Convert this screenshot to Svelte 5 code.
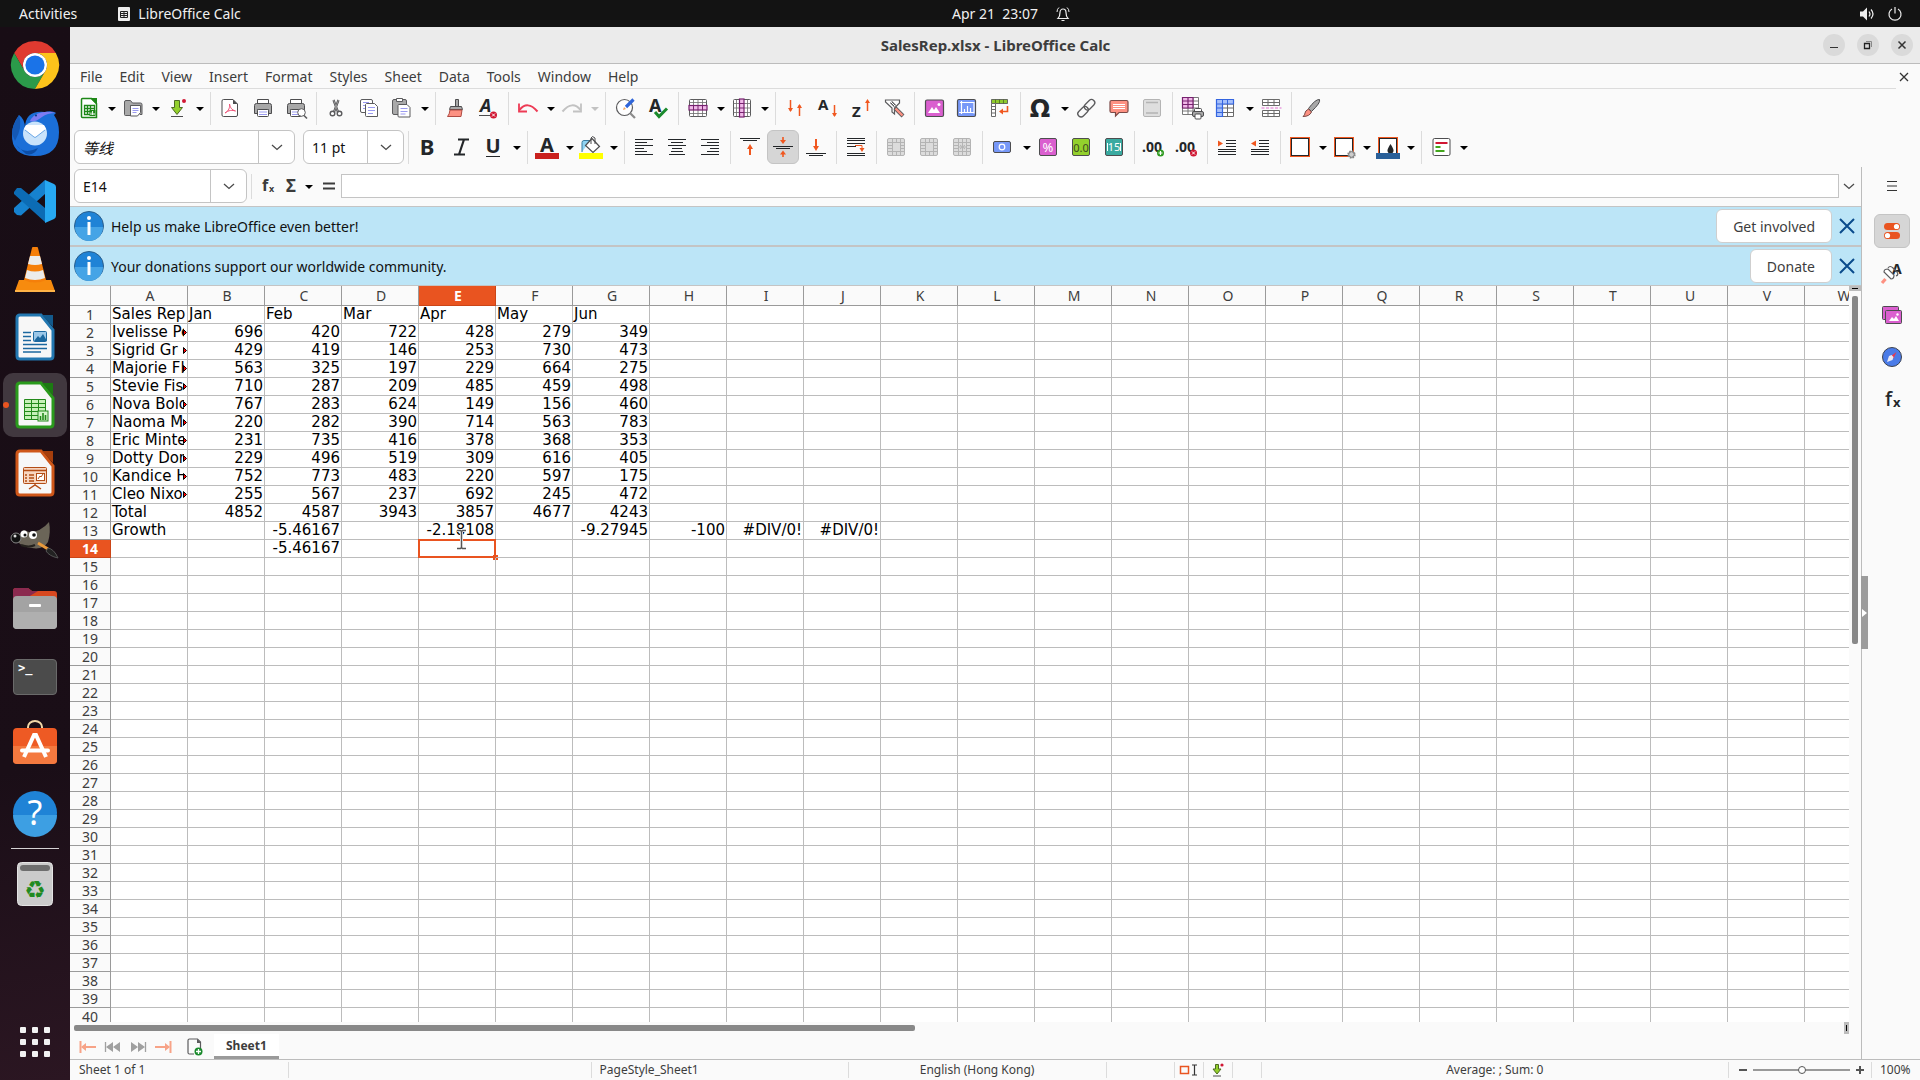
<script lang="ts">
  interface Tool {
    icon?: string;
    label?: string;
    drop?: boolean;
    wide?: boolean;
    pressed?: boolean;
    disabled?: boolean;
    sep?: boolean;
  }

  const menus = ['File', 'Edit', 'View', 'Insert', 'Format', 'Styles', 'Sheet', 'Data', 'Tools', 'Window', 'Help'];
  const columns = 'ABCDEFGHIJKLMNOPQRSTUVW'.split('');
  const rowNumbers = Array.from({ length: 40 }, (_, i) => i + 1);

  const cells: string[][] = [
    ['Sales Rep', 'Jan', 'Feb', 'Mar', 'Apr', 'May', 'Jun'],
    ['Ivelisse Pe', '696', '420', '722', '428', '279', '349'],
    ['Sigrid Gr', '429', '419', '146', '253', '730', '473'],
    ['Majorie Fl', '563', '325', '197', '229', '664', '275'],
    ['Stevie Fis', '710', '287', '209', '485', '459', '498'],
    ['Nova Bolo', '767', '283', '624', '149', '156', '460'],
    ['Naoma M', '220', '282', '390', '714', '563', '783'],
    ['Eric Minte', '231', '735', '416', '378', '368', '353'],
    ['Dotty Don', '229', '496', '519', '309', '616', '405'],
    ['Kandice H', '752', '773', '483', '220', '597', '175'],
    ['Cleo Nixo', '255', '567', '237', '692', '245', '472'],
    ['Total', '4852', '4587', '3943', '3857', '4677', '4243'],
    ['Growth', '', '-5.46167', '', '-2.18108', '', '-9.27945', '-100', '#DIV/0!', '#DIV/0!'],
    ['', '', '-5.46167'],
  ];

  const sep: Tool = { sep: true };

  const standardBar: Tool[] = [
    { icon: 'new', label: 'New', drop: true },
    { icon: 'open', label: 'Open', drop: true },
    { icon: 'save', label: 'Save', drop: true },
    sep,
    { icon: 'pdf', label: 'Export as PDF' },
    { icon: 'print', label: 'Print' },
    { icon: 'preview', label: 'Print Preview' },
    sep,
    { icon: 'cut', label: 'Cut' },
    { icon: 'copy', label: 'Copy' },
    { icon: 'paste', label: 'Paste', drop: true },
    sep,
    { icon: 'clone', label: 'Clone Formatting' },
    { icon: 'clear', label: 'Clear Formatting' },
    sep,
    { icon: 'undo', label: 'Undo', drop: true },
    { icon: 'redo', label: 'Redo', drop: true, disabled: true },
    sep,
    { icon: 'find', label: 'Find and Replace' },
    { icon: 'spell', label: 'Spelling' },
    sep,
    { icon: 'row', label: 'Row', drop: true },
    { icon: 'column', label: 'Column', drop: true },
    sep,
    { icon: 'sort', label: 'Sort' },
    { icon: 'sortAsc', label: 'Sort Ascending' },
    { icon: 'sortDesc', label: 'Sort Descending' },
    { icon: 'filter', label: 'AutoFilter' },
    sep,
    { icon: 'image', label: 'Insert Image' },
    { icon: 'chart', label: 'Insert Chart' },
    { icon: 'pivot', label: 'Insert Pivot Table' },
    sep,
    { icon: 'omega', label: 'Special Character', drop: true, wide: true },
    { icon: 'link', label: 'Insert Hyperlink' },
    { icon: 'comment', label: 'Insert Comment' },
    { icon: 'header', label: 'Headers and Footers', disabled: true },
    sep,
    { icon: 'printArea', label: 'Define Print Area' },
    { icon: 'freeze', label: 'Freeze Rows and Columns', drop: true, wide: true },
    { icon: 'split', label: 'Split Window' },
    sep,
    { icon: 'draw', label: 'Show Draw Functions' },
  ];

  const formatBar: Tool[] = [
    sep,
    { icon: 'bold', label: 'Bold' },
    { icon: 'italic', label: 'Italic' },
    { icon: 'underline', label: 'Underline', drop: true },
    sep,
    { icon: 'fontColor', label: 'Font Color', drop: true },
    { icon: 'fill', label: 'Background Color', drop: true },
    sep,
    { icon: 'left', label: 'Align Left' },
    { icon: 'center', label: 'Center Horizontally' },
    { icon: 'right', label: 'Align Right' },
    sep,
    { icon: 'top', label: 'Align Top' },
    { icon: 'middle', label: 'Center Vertically', pressed: true },
    { icon: 'bottom', label: 'Align Bottom' },
    sep,
    { icon: 'wrap', label: 'Wrap Text' },
    sep,
    { icon: 'merge', label: 'Merge and Center Cells', disabled: true },
    { icon: 'merge', label: 'Merge Cells', disabled: true },
    { icon: 'unmerge', label: 'Unmerge Cells', disabled: true },
    sep,
    { icon: 'currency', label: 'Format as Currency', drop: true, wide: true },
    { icon: 'percent', label: 'Format as Percent' },
    { icon: 'number', label: 'Format as Number' },
    { icon: 'date', label: 'Format as Date' },
    sep,
    { icon: 'addDecimal', label: 'Add Decimal Place' },
    { icon: 'delDecimal', label: 'Delete Decimal Place' },
    sep,
    { icon: 'indent', label: 'Increase Indent' },
    { icon: 'outdent', label: 'Decrease Indent' },
    sep,
    { icon: 'borders', label: 'Borders', drop: true },
    { icon: 'borderStyle', label: 'Border Style', drop: true },
    { icon: 'borderColor', label: 'Border Color', drop: true },
    sep,
    { icon: 'conditional', label: 'Conditional Formatting', drop: true },
  ];

  const printer = '<path d="M6.500 8V3.500h11V8" fill="#fff" stroke="#4d4d4f"/><path d="M3.500 17.500v-8q0-2 2-2h13q2 0 2 2v8h-3v-4h-11v4z" fill="#a8a8a8" stroke="#4d4d4f"/><rect x="6.500" y="13.500" width="11" height="7" rx="1" fill="#fff" stroke="#4d4d4f"/><path d="M8 16h8M8 18.500h8" stroke="#9b9bf0"/>';
  const mergeGrid = '<rect x="3.500" y="3.500" width="17" height="17" rx="1.500" fill="#dcdcdc" stroke="#b4b4b4"/><path d="M3.500 7.500h17M3.500 16.500h17M8.500 3.500v17M16.500 3.500v4M12.500 3.500v4M12.500 16.500v4M16.500 16.500v4M3.500 10.500h5M3.500 13.500h5M16.500 7.500v9M16.500 10.500h4M16.500 13.500h4" stroke="#b4b4b4" fill="none"/>';

  const icons: Record<string, string> = {
    new: '<path d="M5.500 2.500h9l5 5v14h-14q-1 0-1-1v-17q0-1 1-1z" fill="#fff" stroke="#1d8717" stroke-width="1.500"/><path d="M13 2h7v7z" fill="#1d8717"/><path d="M7.500 9.500h10v9h-10zM7.500 12.500h10M7.500 15.500h10M10.500 9.500v9M13.500 9.500v9" fill="none" stroke="#1d8717" stroke-width="1.300"/><rect x="12.500" y="14" width="6" height="6" fill="#1d8717"/><path d="M14 19v-2.500M15.600 19v-4M17 19v-2" stroke="#fff"/>',
    open: '<path d="M3.500 18.500V6q0-1.500 1.500-1.500h4.500l2 2.500h8q1.500 0 1.500 1.500v10h-2" fill="#a9a9a9" stroke="#5b5b5d"/><path d="M3.500 18.500q0 1 1 1h5v-10" fill="#a9a9a9" stroke="#5b5b5d"/><path d="M9.500 9.500h10v7l-3 3.500h-7z" fill="#fff" stroke="#5b5b5d"/><path d="M11.500 12.500h6M11.500 14.500h6M11.500 16.500h4" stroke="#9b9bf0"/>',
    save: '<path d="M9.500 4.500h5v7h3l-5.500 7-5.500-7h3z" fill="#93d02c" stroke="#4f6a25"/><path d="M6 20.500h12" stroke="#4d4d4f"/><circle cx="19" cy="5" r="2" fill="#d01733"/>',
    pdf: '<path d="M5.500 3.500h9.500l4.500 4.500v11q0 1.500-1.500 1.500H5.500q-1.500 0-1.500-1.500V5q0-1.500 1.500-1.500z" fill="#fff" stroke="#4d4d4f"/><path d="M15 3.500V8h4.500z" fill="#4d4d4f"/><path d="M7 17c4-2 5-6 4.500-9 .5 3 2 6 6 7-3-1-7-1-10.500 2z" fill="none" stroke="#ee5277"/>',
    print: printer,
    preview: printer + '<circle cx="17.500" cy="16.500" r="3.800" fill="#fff" stroke="#5b5b5d"/><path d="M20 19.500l3 3" stroke="#5b5b5d" stroke-width="1.600"/>',
    cut: '<path d="M9.500 4l4.500 12M14.500 4L10 16" stroke="#4d4d4f" stroke-width="2.200"/><path d="M9.500 4l4.500 12M14.500 4L10 16" stroke="#bbb" stroke-width=".7"/><circle cx="8.500" cy="17.500" r="2.300" fill="#fff" stroke="#5b5b5d" stroke-width="1.400"/><circle cx="15.500" cy="17.500" r="2.300" fill="#fff" stroke="#5b5b5d" stroke-width="1.400"/>',
    copy: '<rect x="3.500" y="3.500" width="12" height="13" rx="1.500" fill="#fff" stroke="#5b5b5d"/><path d="M6 6.500h6M6 9.500h3M6 12.500h3" stroke="#9b9bf0"/><path d="M9.500 7.500h8l3 3v10h-11q-1 0-1-1v-11z" fill="#fff" stroke="#5b5b5d"/><path d="M11 11.500h7M11 14.500h7M11 17.500h5" stroke="#9b9bf0"/>',
    paste: '<rect x="2.500" y="3.500" width="14" height="15" rx="1.500" fill="#a9a9a9" stroke="#5b5b5d"/><path d="M6.500 5.500v-3h6v3z" fill="#fff" stroke="#5b5b5d"/><path d="M8.500 8.500h8.500l3 3v9.500h-11q-1 0-1-1v-10.500z" fill="#fff" stroke="#5b5b5d"/><path d="M10.500 12.500h7M10.500 15.500h7M10.500 18h5" stroke="#9b9bf0"/>',
    clone: '<path d="M12.500 3.500h3v7h-3z" fill="#a9a9a9" stroke="#4d4d4f"/><path d="M7.500 10.500h11l1 3h-13z" fill="#a9a9a9" stroke="#4d4d4f"/><path d="M7 14h12l-1 6.500H4.500q2-2 2.500-6.500z" fill="#fd9182" stroke="#b04b43"/>',
    clear: '<text x="4" y="16" font-size="18" font-weight="700" font-style="italic" fill="#232629">A</text><path d="M3 19.500h12" stroke="#4d4d4f"/><circle cx="17.500" cy="19" r="3.500" fill="#d01733"/><path d="M16 17.500l3 3M19 17.500l-3 3" stroke="#fff"/>',
    undo: '<path d="M3.500 14q8-10 18 1.500" fill="none" stroke="#ed3b55" stroke-width="2"/><path d="M3 7.500v8h8" fill="none" stroke="#ed3b55" stroke-width="1.800"/>',
    redo: '<path d="M20.500 14q-8-10-18 1.500" fill="none" stroke="#c2c2c2" stroke-width="2"/><path d="M21 7.500v8h-8" fill="none" stroke="#c2c2c2" stroke-width="1.800"/>',
    find: '<circle cx="11.500" cy="11.500" r="8" fill="#fff" stroke="#5b5b5d" stroke-width="1.200"/><path d="M17 17l5 5" stroke="#8b8b8b" stroke-width="2.200"/><path d="M20.500 3.500L13 11" stroke="#2f65d8" stroke-width="3.200"/><path d="M10 14l1-3 2 2z" fill="#f2a35a"/>',
    spell: '<text x="3" y="16" font-size="18" font-weight="700" fill="#232629">A</text><path d="M9 16l4 4.500 8-8" fill="none" stroke="#1a8a2c" stroke-width="3"/>',
    row: '<rect x="3.500" y="3.500" width="17" height="17" rx="1" fill="#fff" stroke="#5b5b5d"/><path d="M7.500 3.500v17M12 3.500v17M16.500 3.500v17M3.500 6.500h17M3.500 17.500h17" stroke="#6b6b6b" stroke-width=".8"/><rect x="3" y="9.500" width="18" height="4.500" fill="#f0b8e8" stroke="#77216f" stroke-width="1.200"/><path d="M7.500 9.500v4.500M12 9.500v4.500M16.500 9.500v4.500" stroke="#77216f"/>',
    column: '<rect x="3.500" y="3.500" width="17" height="17" rx="1" fill="#fff" stroke="#5b5b5d"/><path d="M3.500 7.500h17M3.500 12h17M3.500 16.500h17M6.500 3.500v17M17.500 3.500v17" stroke="#6b6b6b" stroke-width=".8"/><rect x="9.500" y="3" width="4.500" height="18" fill="#f0b8e8" stroke="#77216f" stroke-width="1.200"/><path d="M9.500 7.500h4.500M9.500 12h4.500M9.500 16.500h4.500" stroke="#77216f"/>',
    sort: '<path d="M7.500 4v11M16.500 9v11" stroke="#f0571f" stroke-width="1.500"/><path d="M5 12h5l-2.500 4zM14 12h5l-2.500-4z" fill="#f0571f"/>',
    sortAsc: '<text x="2" y="14" font-size="15" font-weight="700" fill="#232629">A</text><path d="M18.500 9v11" stroke="#f0571f" stroke-width="1.500"/><path d="M16 17h5l-2.500 4z" fill="#f0571f"/>',
    sortDesc: '<text x="3" y="21" font-size="15" font-weight="700" fill="#232629">Z</text><path d="M18.500 5v10" stroke="#f0571f" stroke-width="1.500"/><path d="M16 7h5l-2.500-4z" fill="#f0571f"/>',
    filter: '<path d="M3.500 4h14v3l-5 5v6l-2.500-2v-4l-6.500-6z" fill="#fff" stroke="#5b5b5d" stroke-width="1.200"/><path d="M9 6l4 4" stroke="#5b5b5d" stroke-width="3"/><path d="M9 6l4 4" stroke="#fff"/><path d="M13 12l8 8" stroke="#5b5b5d" stroke-width="4"/><path d="M13.500 12.500l7 7" stroke="#fd9182" stroke-width="2.400"/>',
    image: '<rect x="3.500" y="4" width="18" height="16.500" rx="1.500" fill="#da5fcf" stroke="#4d4d4f" stroke-width="1.200"/><path d="M6 17l4-6 2 3 2-3 4 6z" fill="#fff"/><circle cx="17" cy="8.500" r="1.500" fill="#fff"/>',
    chart: '<rect x="2.500" y="3.500" width="18" height="17" rx="1.500" fill="#7798f8" stroke="#4d4d4f" stroke-width="1.200"/><path d="M6.500 5v13M4 16.500h15M5 6.500h14v11M9.500 16v-3M12.500 16v-6M15.500 16v-4" fill="none" stroke="#fff" stroke-width="1.200"/>',
    pivot: '<path d="M3.500 3.500h16v4h-16z" fill="#8fca2e" stroke="#4d4d4f" stroke-width=".8"/><path d="M7.500 3.500v4M11.500 3.500v4M15.500 3.500v4" stroke="#4d6b20" stroke-width=".8"/><path d="M3.500 7.500h4v13h-4zM3.500 10.500h4M3.500 13.500h4M3.500 17h4" fill="#fff" stroke="#6b6b6b"/><path d="M19.500 10v5.500h-7" fill="none" stroke="#f0571f" stroke-width="1.600"/><path d="M11 15.500l4-3v6z" fill="#f0571f"/>',
    omega: '<text x="12" y="21" text-anchor="middle" font-family="DejaVu Sans" font-size="24" font-weight="700" fill="#232629">Ω</text>',
    link: '<rect x="9.500" y="5.500" width="12" height="6.500" rx="3.200" transform="rotate(-45 15.500 8.700)" fill="none" stroke="#5b5b5d" stroke-width="1.300"/><rect x="3" y="12.500" width="12" height="6.500" rx="3.200" transform="rotate(-45 9 15.700)" fill="none" stroke="#5b5b5d" stroke-width="1.300"/>',
    comment: '<path d="M4.500 4.500h15q1.500 0 1.500 1.500v9q0 1.500-1.500 1.500H12L8.500 20v-3.500h-4Q3 16.500 3 15V6q0-1.500 1.500-1.500z" fill="#fd9182" stroke="#7b4a46" stroke-width="1.200"/><path d="M6 8.500h12M6 10.500h12M6 12.500h12" stroke="#fff"/>',
    header: '<rect x="3.500" y="3.500" width="17" height="17" rx="1.500" fill="#dedede" stroke="#b4b4b4"/><path d="M6 6.500h12M6 17h12" stroke="#b4b4b4" stroke-width="1.600"/>',
    printArea: '<path d="M2.500 1.500h16v17h-16zM2.500 5h16M2.500 8.500h16M2.500 12h16M2.500 15h16M8 1.500v17M13 1.500v17" fill="#fff" stroke="#6b6b6b" stroke-width=".9"/><path d="M2.500 1.500h10.500v10.500h-10.500zM2.500 5h10.500M2.500 8.500h10.500M8 1.500v10.500" fill="#f0b8e8" stroke="#77216f" stroke-width="1.200"/><rect x="14.500" y="12.500" width="7" height="4" rx="1" fill="#fff" stroke="#4d4d4f"/><rect x="12.500" y="15.500" width="11" height="5" rx="1.500" fill="#a8a8a8" stroke="#4d4d4f"/><rect x="15" y="18" width="6" height="5" rx="1" fill="#fff" stroke="#4d4d4f"/>',
    freeze: '<path d="M3.500 3.500h17v17h-17zM3.500 8h17M3.500 12h17M3.500 16.500h17M8.500 3.500v17M14.500 3.500v17" fill="#fff" stroke="#6b6b6b"/><path d="M3.500 3.500h17V8h-11v12.500h-6z" fill="#a6c0fb" stroke="#3465e0" stroke-width="1.200"/><path d="M3.500 8h6M3.500 12h6M3.500 16.500h6M14.500 3.500V8M9.500 3.500V8" stroke="#3465e0"/>',
    split: '<path d="M3.500 3.500h17v6h-17zM3.500 6.500h17M9 3.500v6M15 3.500v6M3.500 14.500h17v6h-17zM3.500 17.500h17M9 14.500v6M15 14.500v6" fill="#fff" stroke="#6b6b6b"/><path d="M2.500 12h20" stroke="#e06fd0" stroke-dasharray="3 1.500"/>',
    draw: '<path d="M20.500 3.500q1.500 3-8 12l-3-3q7-9.500 11-9z" fill="#a9a9a9" stroke="#4d4d4f"/><path d="M9.500 13l3 3q-2 4.500-8.500 4.500 2-1.500 2-3.500t3.500-4z" fill="#fd9182" stroke="#7b4a46"/>',
    bold: '<text x="11" y="20" text-anchor="middle" font-size="22" font-weight="700" fill="#232629">B</text>',
    italic: '<path d="M9 4.500h11M5 19.500h11M15 4.500l-5 15" stroke="#232629" stroke-width="2.200"/>',
    underline: '<text x="11" y="18" text-anchor="middle" font-size="20" font-weight="700" fill="#232629">U</text><path d="M4 21.500h14" stroke="#232629"/>',
    fontColor: '<text x="12" y="17" text-anchor="middle" font-size="20" font-weight="700" fill="#232629">A</text><path d="M0 18h24v6H0z" fill="#c9211e"/>',
    fill: '<path d="M3 17V7.500q0-2 2-2h6" fill="#8fd3f2" stroke="#3a7ca0"/><path d="M13 3.500l7.500 8-6.500 6-7.500-7z" fill="#fff" stroke="#4d4d4f" stroke-width="1.200"/><path d="M12 9V3q1-3 4 0v6" fill="none" stroke="#4d4d4f"/><path d="M0 18h24v6H0z" fill="#ffff00"/>',
    left: '<path d="M3 4.500h18M3 7.500h12M3 10.500h18M3 13.500h9M3 16.500h12M3 19.500h18" stroke="#232629"/>',
    center: '<path d="M3 4.500h18M6 7.500h12M3 10.500h18M7 13.500h10M6 16.500h12M4 19.500h16" stroke="#232629"/>',
    right: '<path d="M3 4.500h18M9 7.500h12M3 10.500h18M12 13.500h9M9 16.500h12M3 19.500h18" stroke="#232629"/>',
    top: '<path d="M2 3.500h20M5 5.500h14" stroke="#232629"/><path d="M12 20V12" stroke="#f0571f" stroke-width="2"/><path d="M9 14h6l-3-5z" fill="#f0571f"/>',
    middle: '<path d="M2 11.500h20M5 13.500h14" stroke="#232629"/><path d="M12 2v4M12 22v-4" stroke="#f0571f" stroke-width="1.600"/><path d="M9 5h6l-3 4zM9 19.500h6l-3-4z" fill="#f0571f"/>',
    bottom: '<path d="M2 18.500h20M5 20.500h14" stroke="#232629"/><path d="M12 4v8" stroke="#f0571f" stroke-width="2"/><path d="M9 11h6l-3 5z" fill="#f0571f"/>',
    wrap: '<path d="M3 3.500h18M3 5.500h18M3 8.500h18M3 11.500h9M3 18.500h18M3 20.500h18" stroke="#232629"/><path d="M11 10.500h7v4" fill="none" stroke="#f0571f"/><path d="M15.500 13h5l-2.500 4z" fill="#f0571f"/>',
    merge: mergeGrid,
    unmerge: mergeGrid + '<path d="M12.500 7.500v9M10 10l5 4M15 10l-5 4M8.500 12h8" stroke="#b4b4b4"/>',
    currency: '<rect x="3.500" y="6.500" width="17" height="11" rx="1.500" fill="#7798f8" stroke="#4d4d4f"/><circle cx="12" cy="12" r="2.800" fill="none" stroke="#fff" stroke-width="1.200"/>',
    percent: '<rect x="3.500" y="3.500" width="17" height="17" rx="1.500" fill="#da5fcf" stroke="#4d4d4f"/><text x="12" y="16.500" text-anchor="middle" font-size="13" fill="#fff">%</text>',
    number: '<rect x="3.500" y="3.500" width="17" height="17" rx="1.500" fill="#93d02c" stroke="#4d4d4f"/><text x="12" y="16.500" text-anchor="middle" font-size="11" fill="#3c4a20">0.0</text>',
    date: '<rect x="3.500" y="3.500" width="17" height="17" rx="1.500" fill="#3aaaa0" stroke="#4d4d4f"/><text x="12" y="16" text-anchor="middle" font-size="11" fill="#fff">15</text><path d="M5.500 8v8M18.500 8v8" stroke="#fff"/>',
    addDecimal: '<text x="10" y="17" text-anchor="middle" font-size="14" font-weight="700" fill="#232629">.00</text><circle cx="18.500" cy="18" r="3.500" fill="#2e9a1f"/><path d="M16.500 18h4M18.500 16v4" stroke="#fff" stroke-width="1.200"/>',
    delDecimal: '<text x="10" y="17" text-anchor="middle" font-size="14" font-weight="700" fill="#232629">.00</text><circle cx="18.500" cy="18" r="3.500" fill="#d01733"/><path d="M17 16.500l3 3M20 16.500l-3 3" stroke="#fff"/>',
    indent: '<path d="M11 5.500h10M11 8.500h10M11 11.500h10M3 14.500h18M3 16.500h18M3 19.500h18" stroke="#232629"/><path d="M3 5.500l5 3-5 3z" fill="#f0571f"/>',
    outdent: '<path d="M11 5.500h10M11 8.500h10M11 11.500h10M3 14.500h18M3 16.500h18M3 19.500h18" stroke="#232629"/><path d="M8 5.500l-5 3 5 3z" fill="#f0571f"/>',
    borders: '<rect x="2.500" y="2.500" width="19" height="19" fill="#fff" stroke="#f0571f"/><rect x="3.500" y="3.500" width="17" height="17" fill="none" stroke="#232629"/>',
    borderStyle: '<rect x="2.500" y="2.500" width="19" height="19" fill="#fff" stroke="#f0571f"/><rect x="3.500" y="3.500" width="17" height="17" fill="none" stroke="#232629"/><circle cx="19.500" cy="19.500" r="3.200" fill="#ddd" stroke="#8b8b8b" stroke-width="2" stroke-dasharray="1.500 1"/><circle cx="19.500" cy="19.500" r="2.800" fill="#ccc" stroke="#777"/>',
    borderColor: '<rect x="2.500" y="2.500" width="19" height="19" fill="#fff" stroke="#f0571f"/><rect x="3.500" y="3.500" width="17" height="17" fill="none" stroke="#232629"/><path d="M14.500 9q3 4.500 3 6.500a3 3 0 0 1-6 0q0-2 3-6.500z" fill="#232629"/><path d="M0 18h24v6H0z" fill="#2a6099"/>',
    conditional: '<rect x="4" y="3.500" width="17" height="17" rx="1.500" fill="#fff" stroke="#4d4d4f"/><path d="M6.500 8h12" stroke="#d01733" stroke-width="2"/><path d="M6.500 12h5M6.500 16h9" stroke="#43a61c" stroke-width="2"/>',
    fx: '<text x="6" y="17" font-size="16" font-weight="700" fill="#3b3b3b">f</text><text x="13" y="18" font-size="9" font-weight="700" fill="#3b3b3b">x</text>',
    sigma: '<text x="11" y="18" text-anchor="middle" font-size="17" font-weight="700" fill="#3b3b3b">Σ</text>',
    equals: '<path d="M6 9.500h12M6 14.500h12" stroke="#3b3b3b" stroke-width="2"/>',
    properties: '<rect x="4" y="4" width="16" height="7" rx="3.500" fill="#e95420"/><circle cx="16.500" cy="7.500" r="2.600" fill="#fff"/><rect x="4" y="13" width="16" height="7" rx="3.500" fill="#e95420"/><circle cx="7.500" cy="16.500" r="2.600" fill="#fff"/>',
    styles: '<text x="12" y="13" font-size="14" font-weight="700" fill="#232629">A</text><path d="M4 11q0-3 4-3l6 6q0 4-3 4z" fill="#fff" stroke="#5b5b5d" stroke-width="1.200"/><path d="M8 7q2-3 5 0l4 4q2 3-1 4" fill="none" stroke="#5b5b5d" stroke-width="1.200"/><path d="M5.500 18l-3.500 4" stroke="#fd9182" stroke-width="3.200"/>',
    gallery: '<rect x="2.500" y="3.500" width="16" height="13" rx="1" fill="#da5fcf" stroke="#4d4d4f"/><rect x="5.500" y="7.500" width="16" height="13" rx="1" fill="#da5fcf" stroke="#4d4d4f"/><path d="M9 18l3-4 2 2 2-3 3 5z" fill="#fff"/><circle cx="17.500" cy="11.500" r="1.200" fill="#fff"/>',
    navigator: '<circle cx="12" cy="12" r="9.500" fill="#4a7be8" stroke="#3c4250"/><path d="M16.500 7l-3 6.500-2.500-2.500z" fill="#e8394f"/><path d="M7 17l2-6 2.500-1 2 2-1 3z" fill="#e8e8f4"/>',
    functions: '<text x="5" y="19" font-size="20" font-weight="500" fill="#232629">f</text><text x="13" y="20" font-size="13" font-weight="700" fill="#232629">x</text>',
  };

  const doc = (edge: string, dark: string, body: string) =>
    `<path d="M9 2h21l12 15v26q0 3-3 3H9q-3 0-3-3V5q0-3 3-3z" fill="#f7f7f7" stroke="${edge}" stroke-width="3"/><path d="M31 2h11v12z" fill="${dark}"/>${body}`;

  const dock = [
    { name: 'Google Chrome', art: '<path d="M3.200 12A24 24 0 0 1 44.800 12H24A12 12 0 0 0 13.600 30Z" fill="#df3a30"/><path d="M3.200 12A24 24 0 0 0 24 48L34.400 30A12 12 0 0 1 13.600 30Z" fill="#2b9a4a"/><path d="M44.800 12A24 24 0 0 1 24 48L34.400 30A12 12 0 0 0 24 12Z" fill="#fcc31b"/><circle cx="24" cy="24" r="12" fill="#fff"/><circle cx="24" cy="24" r="9.600" fill="#1a73e8"/>' },
    { name: 'Thunderbird', art: '<path d="M1 25q0-9 7-19 6 4 6 13 0-18 20-16 7-2 11 1l-2 2q5 7 5 17 0 24-24 24T1 25z" fill="#1b6fd8"/><path d="M20 10q8-10 25-6-9 0-14 4-8 6-12 4z" fill="#7d7cf2"/><path d="M1 25q0-9 7-19 4 12-4 26z" fill="#1458b4"/><circle cx="24" cy="24.500" r="12" fill="#c9e3fb"/><path d="M13 20l10 8q1 1 2 0l10-8-2-4H15z" fill="#fff"/><path d="M14 21l9 7q1 1 2 0l9-7" fill="none" stroke="#6aa7e6"/><path d="M5 36q8 10 22 3-4 8-12 6z" fill="#0d4ea6"/><circle cx="25" cy="6.500" r="1" fill="#063a80"/>' },
    { name: 'Visual Studio Code', art: '<path d="M34 3L3 31v4l3 3 4 .500L34 17z" fill="#1682cf"/><path d="M3 15l3-4h4L34 31v14L3 17z" fill="#0c6cb5"/><path d="M34 3l9 4q2 1 2 3v29q0 2-2 3l-9 4z" fill="#27a9f2"/>' },
    { name: 'VLC', art: '<path d="M8 35h32l4 11H4z" fill="#f78b0e"/><path d="M4 45h40v2H4z" fill="#ffb347"/><path d="M22 2h4q1 0 1 1l8 32q-11 5-22 0L21 3q0-1 1-1z" fill="#f57f0a"/><path d="M19 11h10l2 8q-7 2-14 0zM16 25q8 3 16 0l2 8q-10 4-20 0z" fill="#ececec"/>' },
    { name: 'LibreOffice Writer', art: doc('#2277b0', '#135a8c', '<path d="M12 19.500h8M12 23.500h8M12 27.500h8M12 31.500h24M12 35.500h24M12 39h18" stroke="#1c689f" stroke-width="1.600"/><rect x="22.500" y="18.500" width="13" height="10" rx="1" fill="#9bc7e8" stroke="#1c689f"/><path d="M23 28l4-5 2 2 3-4 4 7z" fill="#1c689f"/>') },
    { name: 'LibreOffice Calc', active: true, art: doc('#2a9a1c', '#1c7a12', '<path d="M13.500 18.500h21v20h-21zM13.500 22.500h21M13.500 26.500h21M13.500 30.500h21M13.500 34.500h21M20.500 18.500v20M27.500 18.500v20" fill="#c7f0b8" stroke="#23891a"/><rect x="27" y="30" width="10" height="10" fill="#d6f5cb" stroke="#23891a"/><path d="M29.500 39v-4M32 39v-7M34.500 39v-5" stroke="#23891a" stroke-width="1.600"/>') },
    { name: 'LibreOffice Impress', art: doc('#cf5719', '#a63e0c', '<rect x="12.500" y="18.500" width="23" height="16" rx="1" fill="#f7d5bf" stroke="#b34d16"/><path d="M12.500 21.500h23M14 26h2M18 26h5M14 29h2M18 29h5M14 32h2M18 32h5" stroke="#b34d16" stroke-width="1.500"/><rect x="25.500" y="24.500" width="8" height="7" fill="#fff" stroke="#b34d16"/><path d="M27 30l2-3 1 1 2-3" fill="none" stroke="#b34d16"/><path d="M24 35v2M18 40l6-4 6 4" fill="none" stroke="#b34d16" stroke-width="1.500"/>') },
    { name: 'GIMP', art: '<path d="M38 5q2 10-1 20-5 8-16 6-10-1-14-6-1-8 6-12l5 2q12 0 20-10z" fill="#6b6558"/><circle cx="5" cy="21" r="5" fill="#111" stroke="#888"/><circle cx="4" cy="19" r="1.500" fill="#ddd"/><circle cx="13" cy="17" r="3.500" fill="#fff"/><circle cx="14" cy="18" r="1.500" fill="#111"/><circle cx="22" cy="18" r="4" fill="#fff"/><circle cx="23" cy="18" r="1.800" fill="#111"/><path d="M10 28q8 3 14 0" fill="none" stroke="#25221d" stroke-width="2"/><path d="M27 26l10 6" stroke="#e8993c" stroke-width="3"/><path d="M37 31q6 1 10 10-9-2-12-7z" fill="#222" stroke="#555"/>' },
    { name: 'Files', art: '<path d="M2 12V6q0-3 3-3h12l4 3h22q3 0 3 3v8H2z" fill="#d8481f"/><path d="M2 12V6q0-3 3-3h12l4 3h6L14 14H2z" fill="#8b2a4f"/><rect x="2" y="11" width="44" height="33" rx="4" fill="#a3a3a3"/><path d="M2 27h44v13q0 4-4 4H6q-4 0-4-4z" fill="#afafaf"/><rect x="18" y="19" width="12" height="3" rx="1" fill="#fff"/>' },
    { name: 'Terminal', art: '<rect x="2.500" y="6.500" width="43" height="35" rx="3.500" fill="#4b4b4b" stroke="#6a6a6a"/><text x="7" y="19" font-family="DejaVu Sans Mono" font-size="12" font-weight="700" fill="#fff">&gt;_</text>' },
    { name: 'Ubuntu Software', art: '<path d="M17 9V6a7 6 0 0 1 14 0v3" fill="none" stroke="#f2d8a8" stroke-width="2"/><rect x="2" y="7" width="44" height="36" rx="4" fill="#ee5a24"/><path d="M2 25h44v14q0 4-4 4H6q-4 0-4-4z" fill="#f4793f"/><path d="M13 36L23 14h2l10 22" fill="none" stroke="#fff" stroke-width="4"/><path d="M11 29.500h26" stroke="#fff" stroke-width="4" stroke-linecap="round"/>' },
    { name: 'Help', art: '<circle cx="24" cy="24" r="22" fill="#1f83d6"/><path d="M2 26h44a22 22 0 0 1-44 0z" fill="#3d9fe3"/><text x="24" y="36" text-anchor="middle" font-size="34" fill="#fff">?</text>' },
  ];

  const trash = '<rect x="6.500" y="2.500" width="35" height="43" rx="4" fill="#cbcbcb" stroke="#e4e4e4"/><rect x="9" y="5" width="30" height="6" rx="3" fill="#6e6e6e"/><text x="24" y="38" text-anchor="middle" font-family="DejaVu Sans" font-size="24" fill="#218a21">♻</text>';

  const sideTabs = [
    { icon: 'properties', label: 'Properties', active: true },
    { icon: 'styles', label: 'Styles' },
    { icon: 'gallery', label: 'Gallery' },
    { icon: 'navigator', label: 'Navigator' },
    { icon: 'functions', label: 'Functions' },
  ];

  const banners = [
    { text: 'Help us make LibreOffice even better!', action: 'Get involved' },
    { text: 'Your donations support our worldwide community.', action: 'Donate' },
  ];

  const selectedCol = 4;
  const selectedRow = 14;
  let fontName = $state('等线');
  let fontSize = $state('11 pt');
  let cellName = $state('E14');
  let formula = $state('');
  let zoom = $state(50);

  function isText(row: number, col: number): boolean {
    return row === 1 || col === 0;
  }

  function overflows(row: number, col: number): boolean {
    return col === 0 && row > 1 && row < 12;
  }
</script>

{#snippet chevron()}
  <svg width="12" height="12" viewBox="0 0 12 12"><path d="M1 4l5 4.500L11 4" fill="none" stroke="#4a4a4a" stroke-width="1.300" /></svg>
{/snippet}

{#snippet tools(list: Tool[])}
  {#each list as tool}
    {#if tool.sep}
      <span class="sep"></span>
    {:else}
      <button class="tool" class:drop={tool.drop} class:wide={tool.wide} class:pressed={tool.pressed} class:disabled={tool.disabled} aria-label={tool.label}>
        <svg width="24" height="24" viewBox="0 0 24 24">{@html icons[tool.icon ?? '']}</svg>
        {#if tool.drop}
          <i class="caret"></i>
        {/if}
      </button>
    {/if}
  {/each}
{/snippet}

<div class="desktop">
  <header class="topbar">
    <div class="topbar-left">
      <span>Activities</span>
      <span class="app-name">
        <svg width="12" height="14" viewBox="0 0 12 14"><rect width="12" height="14" rx="1" fill="#eee" /><path d="M2.500 4.500h7v6h-7zM2.500 6.500h7M2.500 8.500h7M6 4.500v6" fill="none" stroke="#222" /></svg>
        LibreOffice Calc
      </span>
    </div>
    <div class="clock">
      <span>Apr 21&nbsp; 23:07</span>
      <svg width="14" height="16" viewBox="0 0 14 16"><path d="M2 12.500q2-2 2-6a3 3.500 0 0 1 6 0q0 4 2 6z" fill="none" stroke="#eee" stroke-width="1.200" /><path d="M5.500 14.500h3M1 6q0-3 2-4.500M13 6q0-3-2-4.500" fill="none" stroke="#eee" /></svg>
    </div>
    <div class="tray">
      <svg width="16" height="16" viewBox="0 0 16 16"><path d="M1 5.500h3l4-4v13l-4-4H1z" fill="#eee" /><path d="M10 5.500q2 2.500 0 5M12 3.500q4 4.500 0 9" fill="none" stroke="#eee" stroke-width="1.200" /></svg>
      <svg width="16" height="16" viewBox="0 0 16 16"><path d="M5 3a6 6 0 1 0 6 0M8 1v6.500" fill="none" stroke="#eee" stroke-width="1.200" /></svg>
    </div>
  </header>

  <div class="workspace">
    <nav class="dock">
      {#each dock as app}
        <button class="dock-item" class:active={app.active} aria-label={app.name}>
          <svg width="48" height="48" viewBox="0 0 48 48">{@html app.art}</svg>
        </button>
      {/each}
      <span class="dock-line"></span>
      <button class="dock-item" aria-label="Trash">
        <svg width="48" height="48" viewBox="0 0 48 48">{@html trash}</svg>
      </button>
      <button class="dock-item show-apps" aria-label="Show Applications">
        <svg width="30" height="30" viewBox="0 0 30 30" fill="#f2f2f2">
          {#each [0, 12, 24] as y}
            {#each [0, 12, 24] as x}
              <rect {x} {y} width="6" height="6" rx="1" />
            {/each}
          {/each}
        </svg>
      </button>
    </nav>

    <div class="window">
      <div class="titlebar">
        <span class="title-text">SalesRep.xlsx - LibreOffice Calc</span>
        <div class="window-buttons">
          <button aria-label="Minimize"><svg width="10" height="10" viewBox="0 0 10 10"><path d="M1 7.500h8" stroke="#333" /></svg></button>
          <button aria-label="Restore"><svg width="10" height="10" viewBox="0 0 10 10"><path d="M1.500 3.500h5v5h-5z" fill="none" stroke="#222" stroke-width="1.300" /><path d="M3 1.500h5.500V7" fill="none" stroke="#888" /></svg></button>
          <button aria-label="Close"><svg width="10" height="10" viewBox="0 0 10 10"><path d="M1.500 1.500l7 7M8.500 1.500l-7 7" stroke="#333" stroke-width="1.500" /></svg></button>
        </div>
      </div>

      <div class="menubar">
        <div class="menus">
          {#each menus as menu}
            <button>{menu}</button>
          {/each}
        </div>
        <button class="close-doc" aria-label="Close Document"><svg width="10" height="10" viewBox="0 0 10 10"><path d="M1 1l8 8M9 1L1 9" stroke="#333" stroke-width="1.300" /></svg></button>
      </div>

      <div class="toolbar">{@render tools(standardBar)}</div>

      <div class="toolbar format">
        <div class="combo font-name">
          <input aria-label="Font Name" bind:value={fontName} />
          <button aria-label="Show fonts">{@render chevron()}</button>
        </div>
        <div class="combo font-size">
          <input aria-label="Font Size" bind:value={fontSize} />
          <button aria-label="Show sizes">{@render chevron()}</button>
        </div>
        {@render tools(formatBar)}
      </div>

      <div class="main">
        <div class="content">
          <div class="formula-bar">
            <div class="combo cell-name">
              <input aria-label="Name Box" bind:value={cellName} />
              <button aria-label="Show names">{@render chevron()}</button>
            </div>
            <span class="sep short"></span>
            <button class="mini" aria-label="Function Wizard"><svg width="24" height="24" viewBox="0 0 24 24">{@html icons.fx}</svg></button>
            <button class="mini" aria-label="Select Function"><svg width="24" height="24" viewBox="0 0 24 24">{@html icons.sigma}</svg><i class="caret"></i></button>
            <button class="mini" aria-label="Formula"><svg width="24" height="24" viewBox="0 0 24 24">{@html icons.equals}</svg></button>
            <input class="formula" aria-label="Input line" bind:value={formula} />
            <button class="expand" aria-label="Expand Formula Bar">{@render chevron()}</button>
          </div>

          {#each banners as banner}
            <div class="banner">
              <svg width="30" height="30" viewBox="0 0 30 30"><circle cx="15" cy="15" r="14.500" fill="#1f83d6" stroke="#2b5f8c" /><path d="M1 16h28a14 14 0 0 1-28 0z" fill="#45a4e6" /><circle cx="15" cy="7" r="2" fill="#fff" /><path d="M15 11v13" stroke="#fff" stroke-width="3" /></svg>
              <span>{banner.text}</span>
              <button class="action">{banner.action}</button>
              <button class="dismiss" aria-label="Close Infobar"><svg width="16" height="16" viewBox="0 0 16 16"><path d="M1 1l14 14M15 1L1 15" stroke="#0a4b8c" stroke-width="2" /></svg></button>
            </div>
          {/each}

          <div class="sheet-area">
            <div class="grid">
              <table>
                <colgroup>
                  <col class="col-number" />
                  {#each columns as _}<col />{/each}
                </colgroup>
                <thead>
                  <tr>
                    <th class="corner"></th>
                    {#each columns as column, c}
                      <th class:selected={c === selectedCol}>{column}</th>
                    {/each}
                  </tr>
                </thead>
                <tbody>
                  {#each rowNumbers as row}
                    <tr>
                      <th class:selected={row === selectedRow}>{row}</th>
                      {#each columns as _, c}
                        <td class:text={isText(row, c)}>
                          <div class="cell" class:clipped={overflows(row, c)}>{cells[row - 1]?.[c] ?? ''}</div>
                          {#if overflows(row, c)}
                            <svg class="more" width="4" height="7" viewBox="0 0 4 7"><path d="M.5 .5l3 3-3 3z" fill="#ff0000" stroke="#000" /></svg>
                          {/if}
                          {#if row === selectedRow && c === selectedCol}
                            <span class="cursor-box"></span>
                            <svg class="pointer" width="11" height="21" viewBox="0 0 11 21"><path d="M1 1.500h3.500l1 1 1-1H10M5.500 2v17M1 19.500h3.500l1-1 1 1H10" fill="none" stroke="#fff" stroke-width="3" /><path d="M1 1.500h3.500l1 1 1-1H10M5.500 2v17M1 19.500h3.500l1-1 1 1H10" fill="none" stroke="#555" stroke-width="1.500" /></svg>
                          {/if}
                        </td>
                      {/each}
                    </tr>
                  {/each}
                </tbody>
              </table>
            </div>
            <div class="vscroll"><span class="splitter"></span><span class="vthumb"></span></div>
          </div>

          <div class="hscroll"><span class="hthumb"></span><span class="splitter side"></span></div>

          <div class="tabs">
            <button aria-label="First Sheet"><svg width="18" height="14" viewBox="0 0 18 14"><path d="M1.500 1v12M3 7h14" stroke="#f7a387" stroke-width="2" /><path d="M2 7l5-4v8z" fill="#f7a387" /></svg></button>
            <button aria-label="Previous Sheet"><svg width="18" height="14" viewBox="0 0 18 14"><path d="M1.500 2v10" stroke="#a0a0a0" stroke-width="1.300" /><path d="M2 7l7-5v10zM9 7l7-5v10z" fill="#a0a0a0" /></svg></button>
            <button aria-label="Next Sheet"><svg width="18" height="14" viewBox="0 0 18 14"><path d="M16.500 2v10" stroke="#a0a0a0" stroke-width="1.300" /><path d="M16 7L9 2v10zM9 7L2 2v10z" fill="#a0a0a0" /></svg></button>
            <button aria-label="Last Sheet"><svg width="18" height="14" viewBox="0 0 18 14"><path d="M16.500 1v12M1 7h14" stroke="#f7a387" stroke-width="2" /><path d="M16 7l-5-4v8z" fill="#f7a387" /></svg></button>
            <button class="add" aria-label="Add Sheet"><svg width="16" height="18" viewBox="0 0 16 18"><path d="M1 2.500Q1 1 2.500 1h8l3 3v7M7 16H2.500Q1 16 1 14.500v-12" fill="none" stroke="#5b5b5d" stroke-width="1.200" /><path d="M10 1l4 4h-4z" fill="#5b5b5d" /><circle cx="11.500" cy="13.500" r="4" fill="#1a8a2c" /><path d="M9 13.500h5M11.500 11v5" stroke="#fff" stroke-width="1.300" /></svg></button>
            <button class="tab">Sheet1</button>
          </div>
        </div>

        <aside class="sidebar">
          <button class="side-tab settings" aria-label="Sidebar Settings"><svg width="10" height="10" viewBox="0 0 10 10"><path d="M0 .5h10M0 5h10M0 9.500h10" stroke="#333" /></svg></button>
          {#each sideTabs as tab}
            <button class="side-tab" class:on={tab.active} aria-label={tab.label}>
              <svg width="24" height="24" viewBox="0 0 24 24">{@html icons[tab.icon]}</svg>
            </button>
          {/each}
          <button class="handle" aria-label="Hide Sidebar"><svg width="5" height="8" viewBox="0 0 5 8"><path d="M0 0l5 4-5 4z" fill="#fff" /></svg></button>
        </aside>
      </div>

      <footer class="status">
        <span>Sheet 1 of 1</span>
        <span></span>
        <span>PageStyle_Sheet1</span>
        <span class="mid">English (Hong Kong)</span>
        <span></span>
        <span class="mid"><svg width="18" height="12" viewBox="0 0 18 12"><rect x=".5" y="2.500" width="8" height="7" fill="none" stroke="#e95420" stroke-width="1.500" /><path d="M12 1h5M14.500 1v10M12 11h5" stroke="#333" stroke-width="1.200" /></svg></span>
        <span class="mid"><svg width="14" height="14" viewBox="0 0 14 14"><path d="M4.500 1.500h3V6H10l-4 5-4-5h2.500z" fill="#93d02c" stroke="#4d6b20" /><path d="M2 13h8" stroke="#4d4d4f" /><circle cx="11" cy="2" r="1.600" fill="#d01733" /></svg></span>
        <span></span>
        <span class="mid">Average: ; Sum: 0</span>
        <span class="zoom">
          <button aria-label="Zoom Out"><svg width="8" height="8" viewBox="0 0 8 8"><path d="M0 4h8" stroke="#555" stroke-width="2" /></svg></button>
          <input type="range" min="0" max="100" aria-label="Zoom" bind:value={zoom} />
          <button aria-label="Zoom In"><svg width="8" height="8" viewBox="0 0 8 8"><path d="M0 4h8M4 0v8" stroke="#555" stroke-width="2" /></svg></button>
        </span>
        <span>100%</span>
      </footer>
    </div>
  </div>
</div>

<style>
  :global(body) {
    margin: 0;
  }

  .desktop {
    display: flex;
    flex-direction: column;
    height: 100vh;
    overflow: hidden;
    font-family: "Noto Sans", "Noto Sans CJK SC", sans-serif;
    font-size: 14px;
    color: #3d3d3d;
    background: #fafafa;
  }

  button {
    display: flex;
    align-items: center;
    justify-content: center;
    box-sizing: border-box;
    flex: none;
    margin: 0;
    padding: 0;
    border: 0;
    background: none;
    font: inherit;
    color: inherit;
  }

  svg {
    display: block;
    flex: none;
    overflow: visible;
  }

  .topbar {
    display: grid;
    grid-template-columns: 1fr auto 1fr;
    align-items: center;
    flex: none;
    height: 27px;
    background: #131313;
    color: #f0f0f0;
  }

  .topbar-left {
    display: flex;
    gap: 41px;
    padding-left: 19px;
  }

  .app-name {
    display: flex;
    align-items: center;
    gap: 8px;
  }

  .clock {
    display: flex;
    align-items: center;
    gap: 18px;
    padding-left: 102px;
  }

  .clock,
  .topbar-left {
    white-space: nowrap;
  }

  .tray {
    display: flex;
    justify-content: flex-end;
    gap: 12px;
    padding-right: 17px;
  }

  .workspace {
    display: flex;
    flex: 1;
    min-height: 0;
  }

  .dock {
    display: flex;
    flex-direction: column;
    align-items: center;
    gap: 4px;
    box-sizing: border-box;
    flex: none;
    width: 70px;
    padding: 6px 3px;
    background: linear-gradient(170deg, #180d15 0%, #1a0e17 70%, #2b1622 100%);
  }

  .dock-item {
    width: 64px;
    height: 64px;
    border-radius: 10px;
  }

  .dock-item.active {
    position: relative;
    background: #41383f;
  }

  .dock-item.active::before {
    content: "";
    position: absolute;
    left: 0;
    width: 6px;
    height: 6px;
    border-radius: 3px;
    background: #e95420;
  }

  .dock-line {
    flex: none;
    width: 48px;
    height: 1px;
    margin: -1px 0;
    background: #d5d2d4;
  }

  .show-apps {
    margin-top: auto;
  }

  .window {
    display: flex;
    flex-direction: column;
    flex: 1;
    min-width: 0;
  }

  .titlebar {
    display: flex;
    align-items: center;
    flex: none;
    height: 36px;
    padding: 0 7px 0 98px;
    border-bottom: 1px solid #bcbcbc;
    background: #ebebeb;
    font-size: 15px;
    font-weight: 700;
  }

  .title-text {
    flex: 1;
    text-align: center;
  }

  .window-buttons {
    display: flex;
    gap: 12px;
  }

  .window-buttons button {
    width: 22px;
    height: 22px;
    border-radius: 11px;
    background: #dadada;
  }

  .menubar {
    display: flex;
    flex: none;
    height: 25px;
  }

  .menus {
    display: flex;
    gap: 17px;
    flex: 1;
    padding-left: 10px;
    border-bottom: 1px solid #dcdcdc;
  }

  .close-doc {
    width: 24px;
    padding-right: 8px;
  }

  .toolbar {
    display: flex;
    align-items: center;
    gap: 1px;
    flex: none;
    height: 38px;
    padding-left: 3px;
  }

  .tool {
    height: 34px;
    padding: 0 4px;
    border-radius: 6px;
  }

  .pressed {
    padding: 0 3px;
    border: 1px solid #c4c4c4;
    background: #d6d6d6;
  }

  .tool.drop {
    justify-content: space-between;
    width: 43px;
    padding-right: 0;
  }

  .tool.wide {
    width: 45px;
  }

  .caret {
    width: 0;
    height: 0;
    margin-top: 2px;
    border: 4px solid transparent;
    border-top-color: #000;
    border-bottom-width: 0;
  }

  .disabled .caret {
    border-top-color: #c2c2c2;
  }

  .sep {
    flex: none;
    width: 1px;
    height: 33px;
    margin: 0 2px 0 3px;
    background: #dcdcdc;
  }

  .drop + .sep {
    margin-left: 5px;
  }

  .toolbar.format {
    height: 40px;
    padding-left: 4px;
  }

  .combo {
    display: flex;
    box-sizing: border-box;
    flex: none;
    height: 34px;
    border: 1px solid #c4c4c4;
    border-radius: 6px;
    background: #fff;
  }

  .combo input {
    flex: 1;
    min-width: 0;
    padding: 0 8px;
    border: 0;
    border-right: 1px solid #c4c4c4;
    outline: 0;
    background: none;
    font: inherit;
    color: #111;
  }

  .combo button {
    width: 35px;
  }

  .font-name {
    width: 221px;
    margin-right: 7px;
  }

  .font-name input {
    font-size: 15px;
    font-style: italic;
  }

  .font-size {
    width: 101px;
  }

  .cell-name {
    width: 173px;
  }

  .main {
    display: flex;
    flex: 1;
    min-height: 0;
  }

  .content {
    display: flex;
    flex-direction: column;
    flex: 1;
    min-width: 0;
  }

  .formula-bar {
    display: flex;
    align-items: center;
    flex: none;
    height: 38px;
    padding: 0 0 1px 4px;
  }

  .sep.short {
    height: 25px;
    margin: 0 4px;
  }

  .mini {
    height: 24px;
  }

  .mini .caret {
    margin-right: 4px;
    margin-left: 1px;
  }

  .formula {
    box-sizing: border-box;
    flex: 1;
    height: 24px;
    padding: 0 4px;
    border: 1px solid #c4c4c4;
    outline: 0;
    background: #fff;
    font: inherit;
  }

  .expand {
    width: 22px;
    padding-right: 3px;
  }

  .banner {
    display: flex;
    align-items: center;
    gap: 7px;
    box-sizing: border-box;
    flex: none;
    height: 40px;
    padding: 0 6px 0 4px;
    border: 1px solid #c4c4c4;
    border-right-width: 0;
    border-left-width: 0;
    background: #bce5f7;
    color: #111;
  }

  .banner span {
    flex: 1;
  }

  .action {
    height: 34px;
    padding: 0 16px;
    border: 1px solid #cfcfcf;
    border-radius: 6px;
    background: #fff;
    color: #3d3d3d;
  }

  .sheet-area {
    display: flex;
    flex: 1;
    min-height: 0;
  }

  .grid {
    flex: 1;
    min-width: 0;
    overflow: hidden;
    background: #fff;
  }

  table {
    width: 1812px;
    table-layout: fixed;
    border-spacing: 0;
  }

  col {
    width: 77px;
  }

  .col-number {
    width: 41px;
  }

  th,
  td {
    box-sizing: border-box;
    height: 18px;
    padding: 0;
    border-right: 1px solid #bcbcbc;
    border-bottom: 1px solid #bcbcbc;
    line-height: 17px;
    white-space: nowrap;
  }

  th {
    border-color: #9a9a9a;
    background: #fafafa;
    font-weight: 400;
  }

  thead th {
    height: 20px;
    padding-left: 2px;
    line-height: 19px;
  }

  th.selected {
    border-color: #cb4517;
    background: #e95420;
    color: #fff;
    font-weight: 700;
  }

  td {
    position: relative;
    font-family: "DejaVu Sans", sans-serif;
    font-size: 15px;
    color: #000;
    text-align: right;
  }

  td.text {
    text-align: left;
  }

  .cell {
    height: 17px;
    padding: 0 1px;
  }

  .clipped {
    margin-right: 3px;
    overflow: hidden;
  }

  .more {
    position: absolute;
    right: 0;
    top: 5px;
  }

  .cursor-box {
    position: absolute;
    inset: -1px;
    border: 2px solid #e95420;
  }

  .cursor-box::after {
    content: "";
    position: absolute;
    right: -4px;
    bottom: -4px;
    width: 5px;
    height: 5px;
    background: #e95420;
  }

  .pointer {
    position: absolute;
    left: 37px;
    top: -11px;
    z-index: 1;
  }

  .vscroll {
    display: flex;
    flex-direction: column;
    align-items: center;
    gap: 5px;
    flex: none;
    width: 12px;
  }

  .splitter {
    box-sizing: border-box;
    width: 12px;
    height: 5px;
    border: 2px solid #bcbcbc;
    border-width: 2px 3px;
    background: #000;
  }

  .splitter.side {
    width: 5px;
    height: 12px;
    border-width: 3px 2px;
  }

  .vthumb {
    width: 6px;
    height: calc(47% + 2px);
    border-radius: 2px;
    background: #888;
  }

  .hscroll {
    display: flex;
    justify-content: space-between;
    flex: none;
    height: 12px;
    padding: 0 12px 0 4px;
  }

  .hthumb {
    width: calc(47% + 7px);
    height: 6px;
    margin-top: 3px;
    border-radius: 2px;
    background: #888;
  }

  .tabs {
    display: flex;
    align-items: center;
    gap: 7px;
    flex: none;
    height: 25px;
    padding-left: 9px;
  }

  .add {
    margin: 0 4px 0 8px;
  }

  .tab {
    height: 25px;
    padding: 0 12px;
    border-bottom: 3px solid #9a9a9a;
    background: #fff;
    font-size: 12px;
    font-weight: 700;
  }

  .sidebar {
    position: relative;
    display: flex;
    flex-direction: column;
    align-items: center;
    gap: 8px;
    flex: none;
    width: 56px;
    padding: 2px 0 0 2px;
    border-left: 1px solid #bcbcbc;
  }

  .side-tab {
    width: 36px;
    height: 34px;
    border: 1px solid transparent;
    border-radius: 6px;
  }

  .side-tab.settings {
    margin-bottom: 3px;
  }

  .side-tab.on {
    border-color: #c4c4c4;
    background: #d6d6d6;
  }

  .handle {
    position: absolute;
    left: -1px;
    top: calc(50% - 37px);
    width: 7px;
    height: 73px;
    background: #9c9c9c;
  }

  .status {
    display: grid;
    grid-template-columns: 218px 303fr 257px 258px 68px 29px 29px 29px 468fr 143px 49px;
    align-items: center;
    flex: none;
    height: 20px;
    border-top: 1px solid #bcbcbc;
    line-height: 16px;
    font-size: 12px;
  }

  .status > span {
    height: 16px;
    padding-left: 8px;
    border-left: 1px solid #dcdcdc;
    white-space: nowrap;
  }

  .status > span:first-child {
    border-color: transparent;
  }

  .status .mid {
    display: flex;
    align-items: center;
    justify-content: center;
    padding: 0;
  }

  .status > .zoom {
    display: flex;
    align-items: center;
    gap: 6px;
    padding-left: 10px;
  }

  .zoom input {
    appearance: none;
    width: 97px;
    height: 10px;
    margin: 0;
    background: linear-gradient(#999, #999) center / 100% 2px no-repeat;
  }

  .zoom input::-webkit-slider-thumb {
    appearance: none;
    box-sizing: border-box;
    width: 8px;
    height: 8px;
    border: 1px solid #555;
    border-radius: 4px;
    background: #fff;
  }
</style>
